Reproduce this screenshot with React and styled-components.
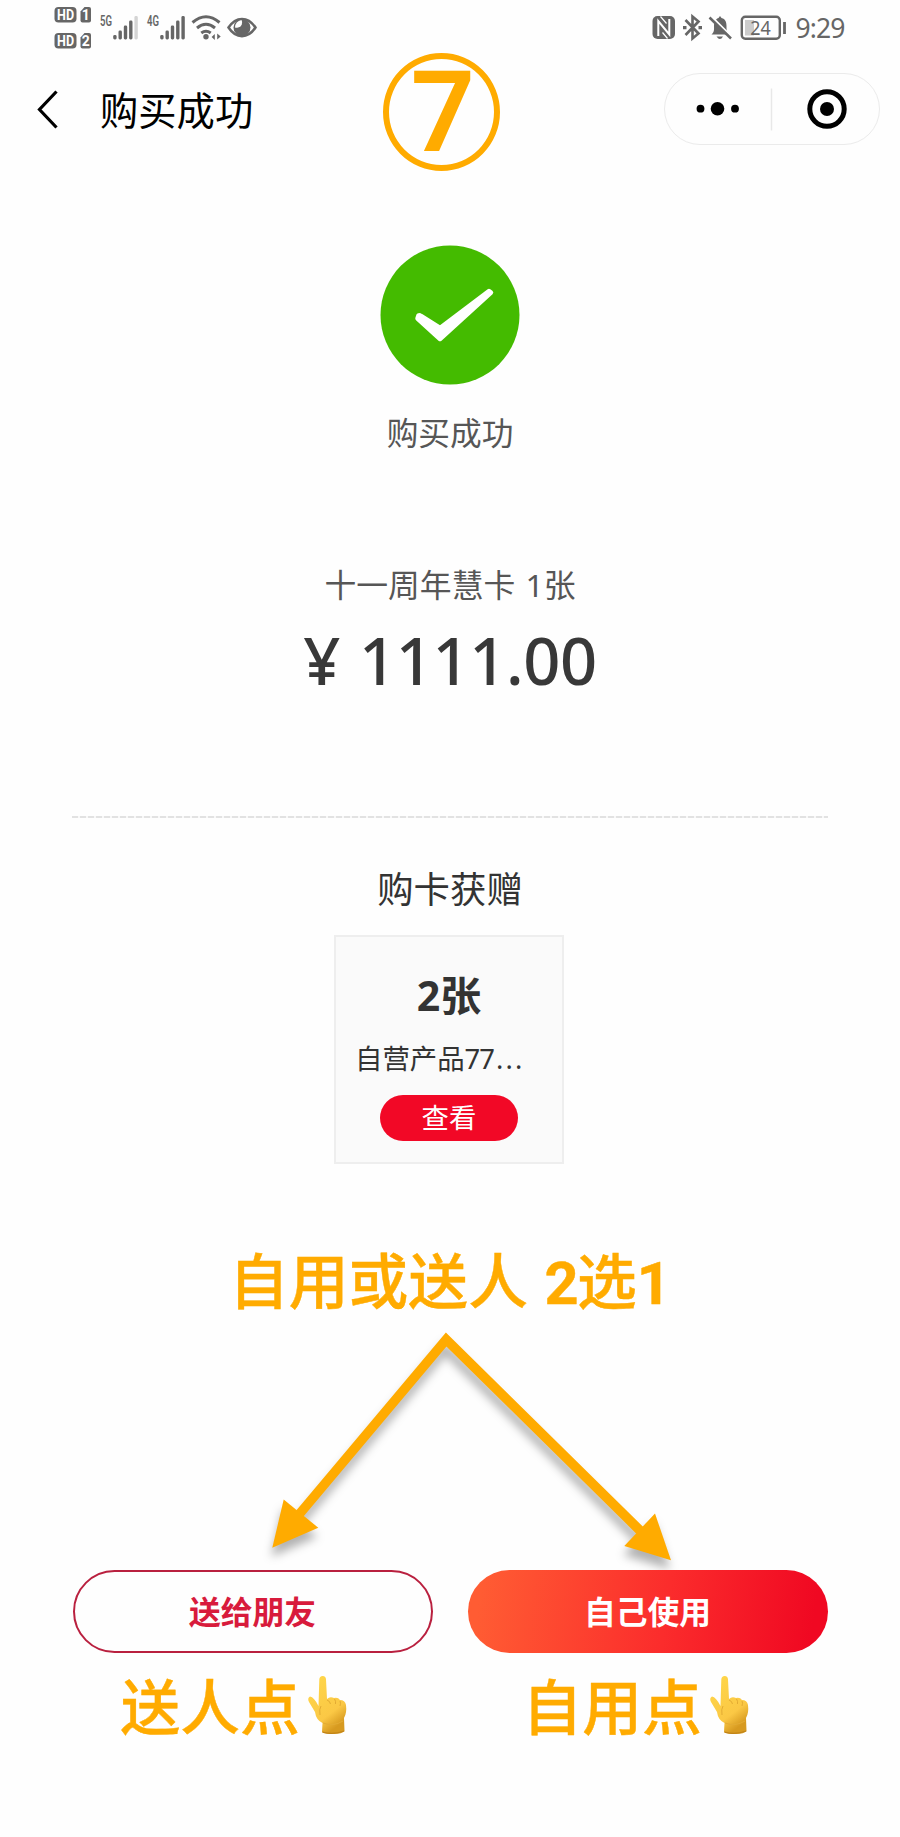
import React from 'react';
import styled, { createGlobalStyle } from 'styled-components';

const GlobalStyle = createGlobalStyle`
*{
    box-sizing:border-box;
}
body{
    margin:0;
    background-color:#fefefe;
    font-family:"Noto Sans", "Noto Sans CJK SC", sans-serif;
}
button{
    font-family:inherit;
    padding:0;
    cursor:pointer;
}
svg{
    display:block;
    flex:none;
}
`;

const Page = styled.div`
width:900px;
height:1837px;
display:flex;
flex-direction:column;
align-items:center;
overflow:hidden;
`;

const StatusBar = styled.div`
width:100%;
height:56px;
display:flex;
justify-content:space-between;
padding:0 55.5px 0 54px;
.left, .right{
    display:flex;
    align-items:flex-start;
}
.time{
    margin-left:10px;
    font-family:"Noto Sans", sans-serif;
    font-size:26.5px;
    line-height:57px;
    letter-spacing:-0.9px;
    color:#666;
}
`;

const NavBar = styled.div`
width:100%;
height:124px;
display:flex;
align-items:flex-start;
padding-left:36px;
.title-group{
    display:flex;
    align-items:center;
    height:107px;
    width:347px;
}
h1{
    margin:0 0 0 40px;
    font-size:38.3px;
    line-height:60px;
    font-weight:400;
    color:#000;
}
`;

const StepBadge = styled.div`
width:117px;
height:118px;
margin-top:-3px;
padding-left:2px;
border:6px solid #ffab00;
border-radius:50%;
text-align:center;
font-family:"Noto Sans", sans-serif;
font-size:112px;
line-height:98px;
font-weight:600;
color:#ffab00;
`;

const Capsule = styled.div`
width:216px;
height:72px;
margin:17px 0 0 164px;
border:1.5px solid #ebebeb;
border-radius:36px;
`;

const Result = styled.div`
display:flex;
flex-direction:column;
align-items:center;
padding-top:65px;
height:376px;
p{
    margin:23px 0 0;
    font-size:31.7px;
    line-height:50px;
    color:#565656;
}
`;

const Order = styled.div`
height:260px;
text-align:center;
padding-top:4px;
.name{
    font-size:31.8px;
    line-height:50px;
    word-spacing:2px;
    color:#565656;
}
.price{
    margin-top:10px;
    font-size:65px;
    line-height:80px;
    font-weight:500;
    letter-spacing:-0.4px;
    color:#383838;
}
.price span{
    margin-right:19px;
}
`;

const Divider = styled.div`
width:756px;
height:2px;
flex:none;
background:repeating-linear-gradient(90deg, #e2e2e2 0 6px, #f8f8f8 6px 8px);
`;

const SectionTitle = styled.h2`
margin:46px 0 0;
font-size:36.4px;
line-height:50px;
font-weight:400;
color:#333;
`;

const GiftCard = styled.div`
width:230px;
height:229px;
margin:21px 2px 0 0;
flex:none;
border:2px solid #eee;
background-color:#fafafa;
display:flex;
flex-direction:column;
align-items:center;
padding-top:33px;
.count{
    font-size:41px;
    line-height:50px;
    font-weight:700;
    color:#333;
}
.desc{
    width:190px;
    padding-left:1px;
    margin-top:19px;
    font-size:27.4px;
    line-height:40px;
    color:#333;
    white-space:nowrap;
}
.num{
    letter-spacing:-1px;
}
.dots{
    margin-left:2px;
    letter-spacing:2.2px;
}
`;

const ViewButton = styled.button`
width:138px;
height:46px;
margin-top:16px;
border:none;
border-radius:23px;
background-color:#f20826;
color:#fff;
font-size:27.4px;
line-height:46px;
`;

const Note = styled.div`
font-family:"Liberation Sans", "Noto Sans CJK SC", sans-serif;
font-size:59.8px;
line-height:70px;
font-weight:500;
color:#ffab00;
-webkit-text-stroke:0.4px #ffab00;
white-space:pre;
b{
    font-family:Roboto, sans-serif;
    font-size:59.5px;
    font-weight:700;
    letter-spacing:-1.8px;
}
`;

const Heading = styled.div`
margin:85px 2px 0 0;
height:84px;
`;

const Actions = styled.div`
display:grid;
grid-template-columns:360px 360px;
column-gap:35px;
`;

const ActionButton = styled.button`
height:83px;
border-radius:42px;
border:${props => props.$primary ? "none" : "2px solid #b9203f"};
background:${props => props.$primary ? "linear-gradient(98deg, #ff5c33 4%, #fb2c2c 55%, #f00822 95%)" : "#fefefe"};
color:${props => props.$primary ? "#fff" : "#d81b3c"};
font-size:31.8px;
font-weight:700;
line-height:78px;
`;

const NoteCell = styled.div`
display:flex;
padding:22px 0 0 ${props => props.$left}px;
svg{
    margin-left:7px;
}
`;

const gray = "#666";

function SimBadges() {
    return (
        <svg width="40" height="56" viewBox="54 0 40 56">
            {[[7, "1"], [33, "2"]].map(([y, n]) => (
                <g key={n}>
                    <rect x="54.5" y={y} width="22" height="15.5" rx="4" fill={gray} />
                    <text x="65.6" y={y + 12.8} textAnchor="middle" textLength="17" lengthAdjust="spacingAndGlyphs" fontFamily="Roboto" fontWeight="700" fontSize="14.5" fill="#fff">HD</text>
                    <path d={`M84.5 ${y}H89a2 2 0 0 1 2 2v11.5a2 2 0 0 1-2 2h-6.5a2 2 0 0 1-2-2V${y + 4.5}z`} fill={gray} />
                    <text x="85.8" y={y + 12.8} textAnchor="middle" fontFamily="Roboto" fontWeight="700" fontSize="14" fill="#fff">{n}</text>
                </g>
            ))}
        </svg>
    )
}

function Signal({ label, weak }) {
    const bars = [[0, 4.5], [5.3, 9], [10.6, 14], [15.9, 19], [21.2, 23.5]];
    return (
        <svg width="47" height="56" viewBox="0 0 47 56">
            <text x="6" y="26" textLength="12" lengthAdjust="spacingAndGlyphs" fontFamily="Roboto" fontWeight="600" fontSize="14.5" fill={gray}>{label}</text>
            {bars.map(([x, h], i) => (
                <rect key={x} x={19.2 + x} y={39.5 - h} width="3.4" height={h} rx="1.4" fill={weak && i === 4 ? "#d4d4d4" : gray} />
            ))}
        </svg>
    )
}

function Wifi() {
    return (
        <svg width="36" height="56" viewBox="188 0 36 56" fill="none" stroke={gray} strokeWidth="3">
            <path d="M192.500 22.500Q206 11 219.500 22.500" />
            <path d="M197 28Q206 20.500 215 28" />
            <path d="M201.300 33Q206 29.500 210.700 33" />
            <circle cx="206" cy="36.800" r="2.700" fill={gray} stroke="none" />
            <path d="M214.800 34v6l-3.200-3zM217.200 33.500v6l3.500-3z" fill={gray} stroke="none" />
        </svg>
    )
}

function Eye() {
    return (
        <svg width="34" height="56" viewBox="224 0 34 56">
            <path d="M228.500 27.500C236 16 248 16 255.500 27.500C248 39 236 39 228.500 27.500z" fill="none" stroke={gray} strokeWidth="2.500" />
            <circle cx="242" cy="27.500" r="8.500" fill={gray} />
            <path d="M241.500 20a5 5 0 0 1-3.500 7.500a5 5 0 0 1-3 0a8 8 0 0 1 6.500-7.500z" fill="#fefefe" />
        </svg>
    )
}

function SystemIcons() {
    return (
        <svg width="136" height="56" viewBox="650 0 136 56" fill="none" stroke={gray}>
            <rect x="652.500" y="16" width="22.500" height="23" rx="5" fill={gray} stroke="none" />
            <path d="M658.300 36V21L669.300 34.500V19" stroke="#fff" strokeWidth="2" />
            <path d="M660.500 16.500l6 7M667.500 38.500l-5-6" stroke="#fff" strokeWidth="1.200" />
            <path d="M685.500 20l13 13.500-6 5V16.500l6 5-13 13.500" strokeWidth="2.600" />
            <path d="M683 27.700h3.500M698.500 27.700h3.500" strokeWidth="3.200" />
            <path d="M711.500 34.500c3-3 2.500-5 2.500-8.500c0-5 2.500-7.500 4.500-8l1.500-2l1.500 2c4 1 5 4 5 8c0 4 0 5.500 3 8.500z" fill={gray} stroke="none" />
            <path d="M716.500 36.500h6.500q-3 5-6.500 0z" fill={gray} stroke="none" />
            <path d="M711.500 16.500L732 37" stroke="#fff" strokeWidth="2" />
            <path d="M709.500 17.500L731 38.500" strokeWidth="2.500" />
            <rect x="741.800" y="16.800" width="38" height="22" rx="3.500" strokeWidth="2.400" />
            <rect x="745" y="20" width="9" height="15.500" fill="#ccc" stroke="none" />
            <text x="760.500" y="35" textAnchor="middle" textLength="20.500" lengthAdjust="spacingAndGlyphs" fontFamily="Noto Sans" fontSize="20" fill={gray} stroke="none">24</text>
            <path d="M784.500 22v12" strokeWidth="2.800" />
        </svg>
    )
}

function Arrows() {
    return (
        <svg width="460" height="237" viewBox="220 1333 460 237" overflow="visible">
            <g style={{ filter: "drop-shadow(-1px 9px 5px rgba(0,0,0,0.3))" }}>
                <path d="M299 1514.500L446.200 1339.500L642 1532.500" fill="none" stroke="#ffab00" strokeWidth="9.500" />
                <path d="M272.300 1547.700L283.700 1499.500L318.300 1527.700z" fill="#ffab00" />
                <path d="M671 1560.300L655 1513.500L624.300 1546z" fill="#ffab00" />
            </g>
        </svg>
    )
}

function Finger({ id }) {
    return (
        <svg width="42" height="62" viewBox="0 0 42 62">
            <defs>
                <linearGradient id={id} x1="0" y1="0" x2="0.500" y2="1">
                    <stop offset="0" stopColor="#ffd84a" />
                    <stop offset="0.750" stopColor="#fbc845" />
                    <stop offset="1" stopColor="#d79a20" />
                </linearGradient>
            </defs>
            <path d="M12.300 4.500Q12.500 1 15.700 1Q18.900 1 19 4.500L20 24Q23 21 27 23Q31 22 33 25Q38 25 39 30Q40 38 37 43L37.500 56Q35 59 27 59Q18 59 15 57L15.500 48Q9 45 8 37L2 27Q0 23 3 21.500Q7 22 11.500 31z" fill={`url(#${id})`} />
            <path d="M20 25Q23 26 23.500 29M27.500 24Q29 26 28.500 29M33 26Q34 28 33 31M13 40Q12 34 14 31M16 48Q26 52 36 46" fill="none" stroke="#e3ab33" strokeWidth="1" />
            <path d="M15.500 57Q26 60 37.200 56" fill="none" stroke="#c08318" strokeWidth="1.300" />
        </svg>
    )
}

function App() {
    return (
        <Page>
            <GlobalStyle />
            <StatusBar>
                <div className="left">
                    <SimBadges />
                    <Signal label="5G" weak />
                    <Signal label="4G" />
                    <Wifi />
                    <Eye />
                </div>
                <div className="right">
                    <SystemIcons />
                    <span className="time">9:29</span>
                </div>
            </StatusBar>
            <NavBar>
                <div className="title-group">
                    <svg width="24" height="42" viewBox="0 0 24 42">
                        <path d="M20.500 2.500L3.500 20.500L20.500 38.500" fill="none" stroke="#000" strokeWidth="3.200" />
                    </svg>
                    <h1>购买成功</h1>
                </div>
                <StepBadge>7</StepBadge>
                <Capsule>
                    <svg width="213" height="69" viewBox="665 74 213 69">
                        <circle cx="700.500" cy="108.700" r="3.900" />
                        <circle cx="717.500" cy="108.700" r="6.800" />
                        <circle cx="735" cy="108.700" r="3.900" />
                        <path d="M771.500 88.500v42" stroke="#e8e8e8" strokeWidth="1.500" />
                        <circle cx="827" cy="109" r="17.200" fill="none" stroke="#000" strokeWidth="5" />
                        <circle cx="827" cy="109" r="7" />
                    </svg>
                </Capsule>
            </NavBar>
            <Result>
                <svg width="140" height="140" viewBox="380 244.500 140 140">
                    <circle cx="450" cy="314.500" r="69.500" fill="#44bb00" />
                    <path d="M418.500 315Q419.500 314.500 421 315.500L440 327.500L489 290.500L491 292L440 338.500L417.500 318z" fill="#fff" stroke="#fff" strokeWidth="4.500" strokeLinejoin="round" />
                </svg>
                <p>购买成功</p>
            </Result>
            <Order>
                <div className="name">十一周年慧卡 1张</div>
                <div className="price"><span>¥</span>1111.00</div>
            </Order>
            <Divider />
            <SectionTitle>购卡获赠</SectionTitle>
            <GiftCard>
                <div className="count">2张</div>
                <div className="desc">自营产品<span className="num">77</span><span className="dots">...</span></div>
                <ViewButton>查看</ViewButton>
            </GiftCard>
            <Heading>
                <Note>自用或送人 <b>2</b>选<b>1</b></Note>
            </Heading>
            <Arrows />
            <Actions>
                <ActionButton>送给朋友</ActionButton>
                <ActionButton $primary>自己使用</ActionButton>
                <NoteCell $left={48}>
                    <Note>送人点</Note>
                    <Finger id="finger-gift" />
                </NoteCell>
                <NoteCell $left={55}>
                    <Note>自用点</Note>
                    <Finger id="finger-self" />
                </NoteCell>
            </Actions>
        </Page>
    )
}

export default App
